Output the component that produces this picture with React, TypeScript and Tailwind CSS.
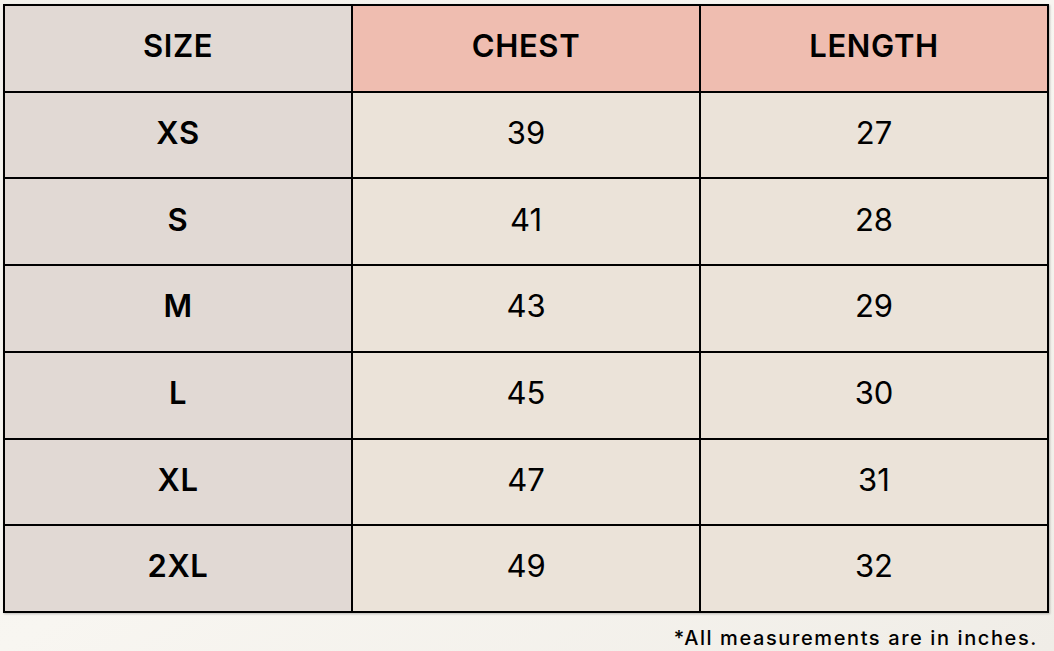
import React from "react";

const rows = [
  ["XS", "39", "27"],
  ["S", "41", "28"],
  ["M", "43", "29"],
  ["L", "45", "30"],
  ["XL", "47", "31"],
  ["2XL", "49", "32"],
];

export default function App() {
  return (
    <div
      className="w-[1054px] h-[651px] overflow-hidden bg-gradient-to-br from-[#f3f1ec] via-[#f8f6f1] to-[#f0ede7] pt-[4px] pl-[3px]"
      style={{ fontFamily: "Inter, 'Noto Sans', sans-serif" }}
    >
      <div className="grid grid-cols-[346px_346px_346px] grid-rows-7 gap-[2px] p-[2px] bg-black w-[1046px] h-[609px] shadow-[1px_1px_2px_rgba(0,0,0,0.25)]">
        <div className="bg-[#e1d9d4] flex items-center justify-center pb-[4px] text-[31px] font-semibold text-black tracking-[0.02em]">SIZE</div>
        <div className="bg-[#efbdb0] flex items-center justify-center pb-[4px] text-[31px] font-semibold text-black tracking-[0.02em]">CHEST</div>
        <div className="bg-[#efbdb0] flex items-center justify-center pb-[4px] text-[31px] font-semibold text-black tracking-[0.02em]">LENGTH</div>
        {rows.map((r) => (
          <React.Fragment key={r[0]}>
            <div className="bg-[#e1d9d4] flex items-center justify-center pb-[4px] text-[31px] font-semibold text-black tracking-[0.02em]">{r[0]}</div>
            <div className="bg-[#ebe3d9] flex items-center justify-center pb-[4px] text-[31px] font-normal text-black">{r[1]}</div>
            <div className="bg-[#ebe3d9] flex items-center justify-center pb-[4px] text-[31px] font-normal text-black">{r[2]}</div>
          </React.Fragment>
        ))}
      </div>
      <div className="w-[1035px] text-right text-[20px] font-medium text-black tracking-[0.08em] leading-none mt-[15px]">
        *All measurements are in inches.
      </div>
    </div>
  );
}
